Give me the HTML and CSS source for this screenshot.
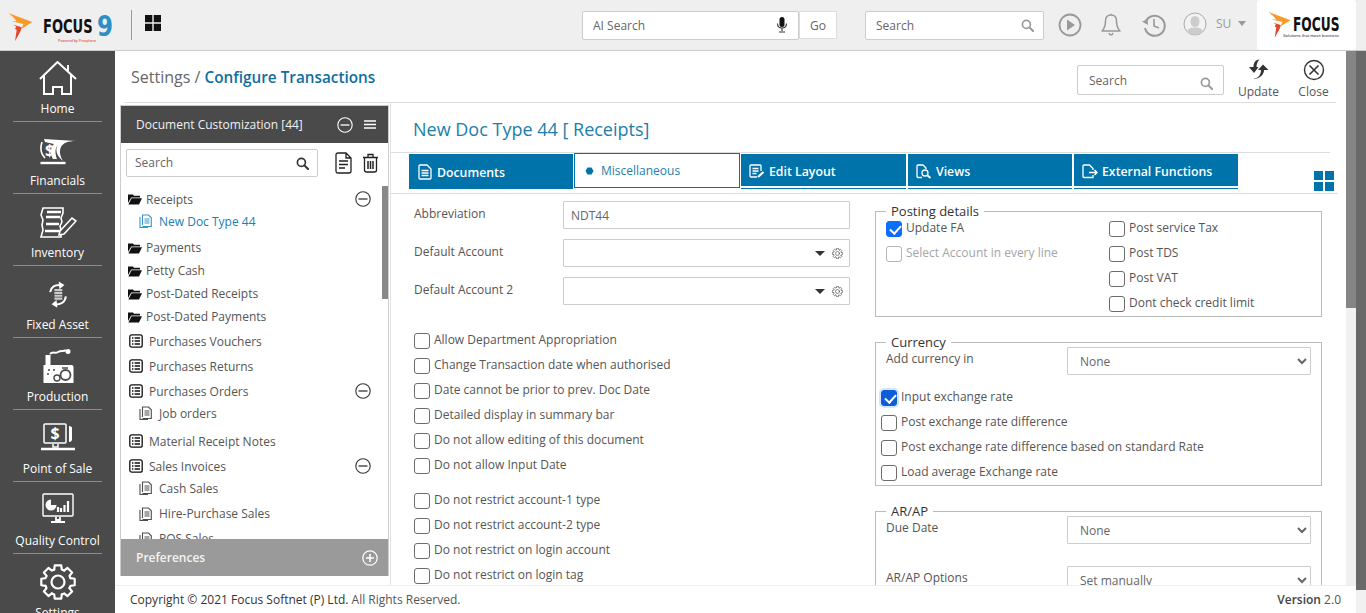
FILE: index.html
```html
<!DOCTYPE html>
<html lang="en">
  <head>
    <meta charset="UTF-8" />
    <meta name="viewport" content="width=device-width, initial-scale=1.0" />
    <title>Configure Transactions</title>
    <link rel="stylesheet" href="styles.css">
  </head>
  <body>
    <!-- SHARED ICONS -->
    <svg class="sprite">
      <symbol id="i-search" viewBox="0 0 14 14"><circle cx="5.8" cy="5.8" r="4.3" fill="none" stroke="currentColor" stroke-width="1.8"/><path d="M9 9l4 4" stroke="currentColor" stroke-width="2.2" stroke-linecap="round"/></symbol>
      <symbol id="i-minus" viewBox="0 0 16 16"><circle cx="8" cy="8" r="7.2" fill="none" stroke="currentColor" stroke-width="1.1"/><path d="M3.5 8h9" stroke="currentColor" stroke-width="1.3"/></symbol>
      <symbol id="i-folder" viewBox="0 0 14 12"><path d="M0 1.5h5l1 1.2h6v1.8H3.2L0 10zM3.6 5.2H14L11 11.5H.4z" fill="currentColor"/></symbol>
      <symbol id="i-list" viewBox="0 0 14 14"><rect x=".8" y=".8" width="12.4" height="12.4" rx="2" fill="none" stroke="currentColor" stroke-width="1.3"/><path d="M3 4h1.4M5.6 4H11M3 7h1.4M5.6 7H11M3 10h1.4M5.6 10H11" stroke="currentColor" stroke-width="1.3"/></symbol>
      <symbol id="i-sub" viewBox="0 0 13 14"><path d="M3.500 11V1h6l2.800 2.800V12.500H3.500M1 3v10.500h8" fill="none" stroke="currentColor" stroke-width="1.100"/><path d="M5.500 5h5M5.500 7h5M5.500 9h5" stroke="currentColor" stroke-width="1.100"/></symbol>
      <symbol id="i-gear" viewBox="0 0 36 36">
        <g fill="none" stroke="currentColor" stroke-width="2.200" stroke-linejoin="round" stroke-linecap="round">
          <path id="gear-tooth" d="M14.200 5.570L14.760 1.310H21.240L21.800 5.570L24.100 6.520"/>
          <use href="#gear-tooth" transform="rotate(45 18 18)"/>
          <use href="#gear-tooth" transform="rotate(90 18 18)"/>
          <use href="#gear-tooth" transform="rotate(135 18 18)"/>
          <use href="#gear-tooth" transform="rotate(180 18 18)"/>
          <use href="#gear-tooth" transform="rotate(225 18 18)"/>
          <use href="#gear-tooth" transform="rotate(270 18 18)"/>
          <use href="#gear-tooth" transform="rotate(315 18 18)"/>
          <circle cx="18" cy="18" r="6.500"/>
        </g>
      </symbol>
      <symbol id="i-flame" viewBox="0 0 24.500 28.500">
        <path d="M.3 0l24 9-10.600 6.700 1.600-4.700-11.600-2.700h5L5.300 4.300z" fill="#f79a2a"/>
        <path d="M5.300 11.700l8.400 2.600-1 3.400L7 28.300l1.700-11.600-1.800-.7 1.400-2.200z" fill="#e4472a"/>
      </symbol>
    </svg>

    <!-- TOP BAR -->
    <header class="topbar">
      <svg class="brand" width="112" height="38" viewBox="0 0 112 38">
        <use href="#i-flame" x="0" y="6" width="24.500" height="28.500"/>
        <text class="brand-name" transform="translate(35 26) scale(1 1.400)">FOCUS</text>
        <text class="brand-nine" x="89" y="29" textLength="16" lengthAdjust="spacingAndGlyphs">9</text>
        <text class="brand-tag" x="50" y="35" textLength="38" lengthAdjust="spacingAndGlyphs">Powered by Prosphere</text>
      </svg>
      <div class="divider"></div>
      <svg class="apps" width="16" height="16" viewBox="0 0 16 16"><path d="M0 0h7.300v7.300H0zM8.700 0H16v7.300H8.700zM0 8.700h7.300V16H0zM8.700 8.700H16V16H8.700z" fill="#111"/></svg>
      <div class="field ai-search">
        <input placeholder="AI Search" />
        <svg width="12" height="16" viewBox="0 0 12 16"><rect x="3.500" y="0" width="5" height="10" rx="2.500" fill="#111"/><path d="M1.500 6.500c0 6 9 6 9 0M6 11.500V14M3 15h6" fill="none" stroke="#333" stroke-width="1.100"/></svg>
      </div>
      <button class="go">Go</button>
      <div class="field top-search">
        <input placeholder="Search" />
        <svg class="muted-icon" width="13" height="13"><use href="#i-search"/></svg>
      </div>
      <svg class="tool play" width="24" height="24" viewBox="0 0 24 24"><circle cx="12" cy="12" r="10.500" fill="none" stroke="#999" stroke-width="1.800"/><path d="M9 6.500l8 5.500-8 5.500z" fill="#999"/></svg>
      <svg class="tool bell" width="24" height="24" viewBox="0 0 24 24"><path d="M12 2c-4 0-5.500 3-5.500 6 0 6-1.500 8-3.500 10h18c-2-2-3.500-4-3.500-10 0-3-1.500-6-5.500-6zM10 20c.5 2.500 3.500 2.500 4 0M12 2V.8" fill="none" stroke="#999" stroke-width="1.500" stroke-linejoin="round"/></svg>
      <svg class="tool history" width="24" height="24" viewBox="0 0 24 24"><path d="M3.500 9A10 10 0 1 1 3 15" fill="none" stroke="#999" stroke-width="2"/><path d="M0 8.500l5.500-2 .5 5.500z" fill="#999"/><path d="M12 6v7l5 2" fill="none" stroke="#999" stroke-width="1.600"/></svg>
      <svg class="tool avatar" width="24" height="24" viewBox="0 0 24 24"><circle cx="12" cy="12" r="11" fill="#f2f2f2" stroke="#aaa"/><ellipse cx="12" cy="9.500" rx="4.500" ry="5.500" fill="#ccc"/><path d="M4 20c1-4 5-4.500 8-4.500s7 .5 8 4.500c-4 3.500-12 3.500-16 0z" fill="#ccc"/></svg>
      <span class="user">SU</span>
      <span class="caret"></span>
      <div class="client-logo">
        <svg width="88" height="30" viewBox="0 0 88 30">
          <use href="#i-flame" x="0" y="2" width="23" height="26"/>
          <text class="brand-name small" transform="translate(25 21) scale(1 1.400)">FOCUS</text>
          <text class="brand-tag dark" x="15" y="27" textLength="56" lengthAdjust="spacingAndGlyphs">Solutions that move business</text>
        </svg>
      </div>
    </header>

    <div class="main">
      <!-- LEFT MENU -->
      <nav class="sidenav">
        <a class="nav-item">
          <svg width="40" height="36" viewBox="0 0 40 36" fill="none" stroke="#fff" stroke-width="2"><path d="M2 18L19.500 1 38 18M6 14v19h9v-7h9v7h9V14M30 4v6"/></svg>
          <span>Home</span>
        </a>
        <a class="nav-item">
          <svg width="38" height="36" viewBox="0 0 38 36" fill="none" stroke="#fff" stroke-width="1.600"><path d="M3 9C1 15 2 21 6 25"/><path d="M5 6l32 2c-8 0-13 2-15 6-2 4-1 9 2 14-5-4-8-9-6-15-2 3-2 8 0 13h-4c-3-5-3-11 1-15l-9-2z" fill="#fff" stroke="none"/><path d="M1.500 30h25" stroke-width="2.400"/><text class="nav-dollar" x="6" y="23">$</text></svg>
          <span>Financials</span>
        </a>
        <a class="nav-item">
          <svg width="38" height="36" viewBox="0 0 38 36" fill="none" stroke="#fff" stroke-width="1.600"><path d="M4 3h20v5l-2 5 1 4-2 4 1 4v7H2l2-7-1-5 1-5-2-5z"/><path d="M8 7h14M7 12h14M7 19h13M6 26h15" stroke-width="2.600"/><path d="M21 26l12-13 4 3-12 13-5 1z" fill="#4a4a4a"/></svg>
          <span>Inventory</span>
        </a>
        <a class="nav-item">
          <svg width="30" height="36" viewBox="-6 -5 42 46" fill="none" stroke="#fff" stroke-width="2.800"><path d="M4 14C5 7 11 3 19 4"/><path d="M16 -1l8 5-7 6z" fill="#fff" stroke="none"/><path d="M26 20c-1 8-7 12-15 11"/><path d="M14 36l-8-5 7-6z" fill="#fff" stroke="none"/><path d="M10 11h11M10 15h11M10 19h11M10 23h11" stroke="#ccc" stroke-width="3"/></svg>
          <span>Fixed Asset</span>
        </a>
        <a class="nav-item">
          <svg width="32" height="36" viewBox="0 0 32 36" fill="#fff"><path d="M1.500 16h2V6h5v10h21q2 0 2 2v16h-30z"/><path d="M8 5c3-3 5 0 8-2s6 0 8-2" fill="none" stroke="#fff" stroke-width="2"/><circle cx="26" cy="2.500" r="2.500"/><circle cx="23.500" cy="26" r="5" fill="none" stroke="#4a4a4a" stroke-width="1.800"/><circle cx="15" cy="29" r="3" fill="none" stroke="#4a4a4a" stroke-width="1.400"/><path d="M6 21h2M11 21h2M5 25h2M20 19h6" stroke="#4a4a4a" stroke-width="1.500"/></svg>
          <span>Production</span>
        </a>
        <a class="nav-item">
          <svg width="36" height="36" viewBox="0 0 36 36" fill="none" stroke="#fff" stroke-width="1.500"><rect x="4" y="3" width="22" height="19" rx="1"/><path d="M29 5c2 0 3 1 3 2v11c0 2-1 3-3 3z" fill="#fff" stroke="none"/><path d="M13 23v3h5v-3" /><path d="M1 28h34" stroke-width="2.600"/><text class="nav-dollar" x="10.500" y="18">$</text></svg>
          <span>Point of Sale</span>
        </a>
        <a class="nav-item">
          <svg width="34" height="36" viewBox="0 0 34 36" fill="none" stroke="#fff" stroke-width="1.400"><rect x="2" y="1" width="30" height="22" rx="1"/><path d="M10 6.500a5.500 5.500 0 1 0 5.500 5.500H10z" fill="#fff" stroke="none"/><path d="M17 19v-5M20 19v-4M23.500 19v-7M27 19V8" stroke-width="2.200"/><path d="M15 24v3h4v-3M10 29h14" stroke-width="1.800"/></svg>
          <span>Quality Control</span>
        </a>
        <a class="nav-item settings">
          <svg width="36" height="36"><use href="#i-gear"/></svg>
          <span>Settings</span>
        </a>
      </nav>

      <div class="page">
        <!-- PAGE TITLE -->
        <div class="page-head">
          <h1 class="crumbs">Settings / <b>Configure Transactions</b></h1>
          <div class="field head-search">
            <input placeholder="Search" />
            <svg class="muted-icon" width="13" height="13"><use href="#i-search"/></svg>
          </div>
          <a class="action action-first">
            <svg width="22" height="22" viewBox="0 0 22 22" fill="#333"><path d="M11.500.5C7 1 5.500 4 5.500 8H1l5 6 4.500-6h-2c0-3 1-5.500 3-7.500z"/><path d="M5 19.500c5 0 8-3.500 8-8.500h-3l5-5.500 5.500 5.500H16c0 5-5 9.500-11 8.500z"/></svg>
            <span>Update</span>
          </a>
          <a class="action">
            <svg width="22" height="22" viewBox="0 0 22 22" fill="none" stroke="#333" stroke-width="1.400"><circle cx="11" cy="11" r="9.500"/><path d="M6.500 6.500l9 9M15.500 6.500l-9 9" stroke-width="1.600"/></svg>
            <span>Close</span>
          </a>
        </div>

        <div class="work">
          <!-- DOCUMENT TREE -->
          <aside class="panel">
            <div class="panel-head">
              <span>Document Customization [44]</span>
              <svg class="panel-minus" width="16" height="16"><use href="#i-minus"/></svg>
              <svg width="12" height="9" viewBox="0 0 12 9"><path d="M0 1h12M0 4.500h12M0 8h12" stroke="#fff" stroke-width="1.300"/></svg>
            </div>
            <div class="panel-tools">
              <div class="field panel-search">
                <input placeholder="Search" />
                <svg class="dark-icon" width="13" height="13"><use href="#i-search"/></svg>
              </div>
              <svg class="doc-icon" width="17" height="22" viewBox="0 0 17 22" fill="none" stroke="#222" stroke-width="1.300"><path d="M1 3q0-2 2-2h8l5 5v13q0 2-2 2H3q-2 0-2-2zM11 1v5h5"/><path d="M4 9h9M4 12.500h9M4 16h6"/></svg>
              <svg class="trash-icon" width="17" height="20" viewBox="0 0 17 20" fill="none" stroke="#222" stroke-width="1.300"><path d="M1 4.500h15M6 4.500V1.500h5v3M2.500 4.500V17q0 2 2 2h8q2 0 2-2V4.500"/><path d="M6 8v8M8.500 8v8M11 8v8" stroke-width="1.500"/></svg>
            </div>
            <div class="tree">
              <div class="tree-thumb"></div>
              <div class="row row-folder first"><svg width="14" height="12"><use href="#i-folder"/></svg><span>Receipts</span><svg class="row-minus" width="16" height="16"><use href="#i-minus"/></svg></div>
              <div class="row row-sub active"><svg width="13" height="14"><use href="#i-sub"/></svg><span>New Doc Type 44</span></div>
              <div class="row row-folder gap"><svg width="14" height="12"><use href="#i-folder"/></svg><span>Payments</span></div>
              <div class="row row-folder"><svg width="14" height="12"><use href="#i-folder"/></svg><span>Petty Cash</span></div>
              <div class="row row-folder"><svg width="14" height="12"><use href="#i-folder"/></svg><span>Post-Dated Receipts</span></div>
              <div class="row row-folder"><svg width="14" height="12"><use href="#i-folder"/></svg><span>Post-Dated Payments</span></div>
              <div class="row row-list"><svg width="14" height="14"><use href="#i-list"/></svg><span>Purchases Vouchers</span></div>
              <div class="row row-list"><svg width="14" height="14"><use href="#i-list"/></svg><span>Purchases Returns</span></div>
              <div class="row row-list"><svg width="14" height="14"><use href="#i-list"/></svg><span>Purchases Orders</span><svg class="row-minus" width="16" height="16"><use href="#i-minus"/></svg></div>
              <div class="row row-sub short"><svg width="13" height="14"><use href="#i-sub"/></svg><span>Job orders</span></div>
              <div class="row row-list gap-small"><svg width="14" height="14"><use href="#i-list"/></svg><span>Material Receipt Notes</span></div>
              <div class="row row-list"><svg width="14" height="14"><use href="#i-list"/></svg><span>Sales Invoices</span><svg class="row-minus" width="16" height="16"><use href="#i-minus"/></svg></div>
              <div class="row row-sub short"><svg width="13" height="14"><use href="#i-sub"/></svg><span>Cash Sales</span></div>
              <div class="row row-sub spaced"><svg width="13" height="14"><use href="#i-sub"/></svg><span>Hire-Purchase Sales</span></div>
              <div class="row row-sub"><svg width="13" height="14"><use href="#i-sub"/></svg><span>POS Sales</span></div>
            </div>
            <div class="panel-foot">
              <span>Preferences</span>
              <svg width="16" height="16" viewBox="0 0 16 16" fill="none" stroke="#fff"><circle cx="8" cy="8" r="7.200" stroke-width="1.200"/><path d="M4 8h8M8 4v8" stroke-width="1.500"/></svg>
            </div>
          </aside>

          <!-- DOCUMENT FORM -->
          <section class="editor">
            <h2 class="doc-title">New Doc Type 44 [ Receipts]</h2>
            <div class="tabs">
              <a class="tab tab-first"><svg width="14" height="16" viewBox="0 0 14 16" fill="none" stroke="#fff" stroke-width="1.300"><path d="M1 2q0-1 1-1h7l4 4v9q0 1-1 1H2q-1 0-1-1z"/><path d="M3.500 6.500h7M3.500 9h7M3.500 11.500h7"/></svg>Documents</a>
              <a class="tab tab-on"><svg width="9" height="8" viewBox="0 0 9 8"><path d="M2.500.5h4L8.500 4l-2 3.500h-4L.5 4z" fill="#0073aa"/></svg>Miscellaneous</a>
              <a class="tab tab-low"><svg width="16" height="15" viewBox="0 0 16 15" fill="none" stroke="#fff" stroke-width="1.300"><path d="M12 7V2q0-1-1-1H2q-1 0-1 1v10q0 1 1 1h6"/><path d="M3.500 4.500h6M3.500 7h6M3.500 9.500h4"/><path d="M9 13l5.500-5" stroke-width="2.200"/></svg>Edit Layout</a>
              <a class="tab tab-low"><svg width="16" height="15" viewBox="0 0 16 15" fill="none" stroke="#fff" stroke-width="1.300"><path d="M6 13.500H2q-1 0-1-1V2q0-1 1-1h5l3 3v1"/><circle cx="9" cy="9" r="3"/><path d="M11 11l3.500 3" stroke-width="1.800"/></svg>Views</a>
              <a class="tab tab-low"><svg width="16" height="15" viewBox="0 0 16 15" fill="none" stroke="#fff" stroke-width="1.300"><path d="M11 11v2.500H2q-1 0-1-1V2q0-1 1-1h5.500L11 4.500V6"/><path d="M7 8.500h8M12.500 6l2.500 2.500-2.500 2.500" stroke-width="1.500"/></svg>External Functions</a>
              <svg class="layout-grid" width="20" height="20" viewBox="0 0 20 20"><path d="M0 0h9v9H0zM11 0h9v9h-9zM0 11h9v9H0zM11 11h9v9h-9z" fill="#0073aa"/></svg>
            </div>
            <div class="form">
              <div class="col-left">
                <div class="form-row">
                  <label>Abbreviation</label>
                  <input class="text-input" value="NDT44" />
                </div>
                <div class="form-row">
                  <label>Default Account</label>
                  <div class="lookup"><span class="lookup-arrow"></span><svg class="lookup-gear" width="11" height="11"><use href="#i-gear"/></svg></div>
                </div>
                <div class="form-row">
                  <label>Default Account 2</label>
                  <div class="lookup"><span class="lookup-arrow"></span><svg class="lookup-gear" width="11" height="11"><use href="#i-gear"/></svg></div>
                </div>

                <div class="checks first-checks">
                  <label class="check"><input type="checkbox" /><span>Allow Department Appropriation</span></label>
                  <label class="check"><input type="checkbox" /><span>Change Transaction date when authorised</span></label>
                  <label class="check"><input type="checkbox" /><span>Date cannot be prior to prev. Doc Date</span></label>
                  <label class="check"><input type="checkbox" /><span>Detailed display in summary bar</span></label>
                  <label class="check"><input type="checkbox" /><span>Do not allow editing of this document</span></label>
                  <label class="check"><input type="checkbox" /><span>Do not allow Input Date</span></label>
                </div>
                <div class="checks second-checks">
                  <label class="check"><input type="checkbox" /><span>Do not restrict account-1 type</span></label>
                  <label class="check"><input type="checkbox" /><span>Do not restrict account-2 type</span></label>
                  <label class="check"><input type="checkbox" /><span>Do not restrict on login account</span></label>
                  <label class="check"><input type="checkbox" /><span>Do not restrict on login tag</span></label>
                </div>
              </div>

              <div class="col-right">
                <fieldset class="group">
                  <legend>Posting details</legend>
                  <div class="group-body posting">
                    <div>
                      <label class="check"><input type="checkbox" checked /><span>Update FA</span></label>
                      <label class="check disabled"><input type="checkbox" disabled /><span>Select Account in every line</span></label>
                    </div>
                    <div>
                      <label class="check"><input type="checkbox" /><span>Post service Tax</span></label>
                      <label class="check"><input type="checkbox" /><span>Post TDS</span></label>
                      <label class="check"><input type="checkbox" /><span>Post VAT</span></label>
                      <label class="check"><input type="checkbox" /><span>Dont check credit limit</span></label>
                    </div>
                  </div>
                </fieldset>

                <fieldset class="group">
                  <legend>Currency</legend>
                  <div class="group-body">
                    <div class="pick-row">
                      <label>Add currency in</label>
                      <select class="pick"><option>None</option></select>
                    </div>
                    <div class="checks currency-checks">
                      <label class="check focused"><input type="checkbox" checked /><span>Input exchange rate</span></label>
                      <label class="check"><input type="checkbox" /><span>Post exchange rate difference</span></label>
                      <label class="check"><input type="checkbox" /><span>Post exchange rate difference based on standard Rate</span></label>
                      <label class="check"><input type="checkbox" /><span>Load average Exchange rate</span></label>
                    </div>
                  </div>
                </fieldset>

                <fieldset class="group">
                  <legend>AR/AP</legend>
                  <div class="group-body">
                    <div class="pick-row tall">
                      <label>Due Date</label>
                      <select class="pick"><option>None</option></select>
                    </div>
                    <div class="pick-row tall">
                      <label>AR/AP Options</label>
                      <select class="pick"><option>Set manually</option></select>
                    </div>
                  </div>
                </fieldset>
              </div>
            </div>
          </section>
        </div>

        <footer class="footer">
          <span><b class="copy">Copyright &copy; 2021 Focus Softnet (P) Ltd.</b> All Rights Reserved.</span>
          <span><b>Version</b> 2.0</span>
        </footer>
      </div>

      <!-- SCROLLBARS -->
      <div class="scroll-inner"><div class="thumb-inner"></div></div>
      <div class="scroll-outer"><div class="thumb-outer"></div></div>
    </div>
  </body>
</html>
```

FILE: styles.css
```css
* {
  box-sizing: border-box;
}
html, body {
  margin: 0;
  height: 613px;
  overflow: hidden;
}
body {
  font-family: "Open Sans", "DejaVu Sans", sans-serif;
  font-size: 12px;
  color: #555;
  background: #fff;
}
.sprite {
  display: none;
}
input, select, button {
  font-family: inherit;
  font-size: 12px;
  color: #666;
}
input::placeholder {
  color: #666;
  opacity: 1;
}

/* top bar */
.topbar {
  display: flex;
  align-items: center;
  height: 51px;
  padding-left: 8px;
  background: #efefef;
  border-bottom: 1px solid #ccc;
}
.brand {
  flex: none;
  margin-top: 2px;
}
.brand-name {
  font-family: "DejaVu Sans Condensed", "DejaVu Sans", sans-serif;
  font-weight: 700;
  font-size: 14.5px;
  fill: #111;
}
.brand-name.small {
  font-size: 13.6px;
}
.brand-nine {
  font-family: "DejaVu Sans", sans-serif;
  font-weight: 700;
  font-size: 28px;
  fill: #2a8fc7;
}
.brand-tag {
  font-family: "Liberation Sans", "Open Sans", sans-serif;
  font-size: 3.5px;
  fill: #d33;
}
.brand-tag.dark {
  fill: #333;
}
.divider {
  width: 1px;
  height: 30px;
  margin-left: 11px;
  background: #999;
}
.apps {
  margin-left: 13px;
  margin-top: -4px;
}
.field {
  display: flex;
  align-items: center;
  background: #fff;
  border: 1px solid #ccc;
  border-radius: 2px;
}
.field input {
  flex: 1;
  min-width: 0;
  height: 100%;
  border: 0;
  outline: 0;
  padding: 0;
  background: transparent;
}
.muted-icon {
  color: #999;
}
.dark-icon {
  color: #333;
}
.ai-search {
  width: 217px;
  height: 29px;
  margin-left: 421px;
  padding: 0 10px;
}
.go {
  width: 38px;
  height: 28px;
  background: #fff;
  border: 1px solid #ddd;
}
.top-search {
  width: 179px;
  height: 29px;
  margin-left: 28px;
  padding: 0 9px 0 10px;
}
.tool {
  flex: none;
}
.play {
  margin-left: 14px;
}
.bell {
  margin-left: 17px;
}
.history {
  margin-left: 19px;
}
.avatar {
  margin-left: 17px;
  margin-top: -3px;
}
.user {
  margin-left: 9px;
  margin-top: -4px;
  color: #999;
}
.caret {
  margin-left: 7px;
  margin-top: -3px;
  border-left: 4px solid transparent;
  border-right: 4px solid transparent;
  border-top: 5px solid #999;
}
.client-logo {
  display: flex;
  align-items: center;
  width: 99px;
  height: 50px;
  margin-left: 11px;
  padding-left: 11px;
  background: #fff;
  border-radius: 3px;
}

/* layout */
.main {
  display: flex;
  height: 562px;
}
.sidenav {
  flex: none;
  width: 115px;
  background: #4a4a4a;
  overflow: hidden;
}
.nav-item {
  display: flex;
  flex-direction: column;
  align-items: center;
  gap: 4px;
  height: 72px;
  margin: 0 13px;
  padding-top: 11px;
  color: #fff;
  line-height: 16px;
  white-space: nowrap;
  border-bottom: 1px solid #8b8b8b;
}
.nav-item:first-child {
  height: 71px;
  padding-top: 10px;
}
.nav-item svg {
  flex: none;
}
.nav-item.settings {
  border-bottom: 0;
  gap: 5px;
  height: 90px;
  padding-top: 10px;
}
.nav-dollar {
  font-family: "Open Sans", sans-serif;
  font-weight: 700;
  font-size: 16px;
  fill: #fff;
  stroke: none;
}
.page {
  flex: 1;
  min-width: 0;
  display: flex;
  flex-direction: column;
}
.scroll-inner {
  flex: none;
  width: 10px;
  height: 534px;
  background: #f1f1f1;
}
.thumb-inner {
  height: 257px;
  background: #858585;
}
.scroll-outer {
  flex: none;
  width: 10px;
  background: #f1f1f1;
}
.thumb-outer {
  height: 539px;
  background: #696969;
}

/* page title */
.page-head {
  flex: none;
  display: flex;
  align-items: flex-start;
  height: 52px;
  margin: 0 10px;
  padding-left: 6px;
  border-bottom: 1px solid #ddd;
}
.crumbs {
  flex: 1;
  margin: 16px 0 0;
  font-size: 16px;
  font-weight: 400;
  line-height: 20px;
  color: #666;
}
.crumbs b {
  font-size: 15.3px;
  font-weight: 600;
  color: #0f6f9f;
}
.head-search {
  width: 147px;
  height: 30px;
  margin-top: 14px;
  padding: 0 10px 0 11px;
}
.head-search svg {
  margin-top: 6px;
}
.action {
  display: flex;
  flex-direction: column;
  align-items: center;
  gap: 3px;
  width: 55px;
  padding-top: 8px;
  line-height: 16px;
}
.action-first {
  margin-left: 7px;
}
.action:last-child {
  margin-right: -5px;
}

/* document tree */
.work {
  flex: 1;
  min-height: 0;
  display: flex;
  overflow: hidden;
}
.panel {
  flex: none;
  display: flex;
  flex-direction: column;
  width: 269px;
  height: 471px;
  margin: 2px 0 0 5px;
  border: 1px solid #ccc;
  border-bottom: 0;
}
.panel-head {
  flex: none;
  display: flex;
  align-items: center;
  height: 37px;
  padding: 0 12px 0 15px;
  background: #4a4a4a;
  color: #f0f0f0;
}
.panel-head span {
  flex: 1;
}
.panel-minus {
  color: #fff;
  margin-right: 11px;
}
.panel-tools {
  flex: none;
  display: flex;
  align-items: center;
  height: 39px;
  padding: 1px 8px 0 5px;
}
.panel-search {
  width: 192px;
  height: 28px;
  padding: 0 8px;
}
.panel-search input {
  margin-top: -2px;
}
.doc-icon {
  margin-left: 17px;
  margin-top: -1px;
}
.trash-icon {
  margin-left: 10px;
  margin-top: -1px;
}
.tree {
  position: relative;
  flex: 1;
  min-height: 0;
  padding-top: 6px;
  overflow: hidden;
  color: #555;
}
.tree-thumb {
  position: absolute;
  top: 4px;
  right: 0;
  width: 6px;
  height: 113px;
  background: #888;
}
.row {
  display: flex;
  align-items: center;
  padding-right: 17px;
  white-space: nowrap;
}
.row > svg:first-child {
  flex: none;
  color: #111;
}
.row-folder {
  height: 23px;
  padding-left: 7px;
  gap: 4px;
}
.row-folder.first {
  height: 22px;
}
.row-folder.gap {
  margin-top: 4px;
}
.row-list {
  height: 25px;
  padding-left: 8px;
  gap: 6px;
}
.row-list > span {
  margin-top: 2px;
}
.row-list.gap-small {
  margin-top: 5px;
}
.row-sub {
  height: 25px;
  padding-left: 18px;
  gap: 7px;
}
.row-sub > svg:first-child {
  color: #4d4d4d;
}
.row-sub.short {
  height: 20px;
}
.row-sub.spaced {
  margin-top: 3px;
}
.row-sub.active {
  height: 22px;
  color: #1c80ad;
}
.row-sub.active > svg:first-child {
  color: #3b95c2;
}
.row-minus {
  margin-left: auto;
  color: #333;
}
.panel-foot {
  flex: none;
  display: flex;
  align-items: center;
  justify-content: space-between;
  height: 37px;
  padding: 0 10px 0 15px;
  background: #9a9a9a;
  color: #f4f4f4;
  font-weight: 600;
}

/* document form */
.editor {
  flex: 1;
  min-width: 0;
  margin-left: 1px;
  border-left: 1px solid #e2e2e2;
  overflow: hidden;
}
.doc-title {
  height: 50px;
  margin: 0 16px 0 0;
  padding: 13px 0 0 22px;
  font-size: 18px;
  font-weight: 400;
  line-height: 26px;
  color: #1c7ea9;
  border-bottom: 1px solid #ddd;
}
.tabs {
  display: flex;
  align-items: flex-start;
  gap: 1px;
  height: 41px;
  padding: 1px 0 0 18px;
  margin-right: 8px;
  border-bottom: 1px solid #ddd;
}
.tab {
  display: flex;
  align-items: center;
  gap: 4px;
  width: 165px;
  height: 35px;
  padding: 0 0 0 8px;
  background: #0073aa;
  color: #fff;
  font-size: 12.3px;
  font-weight: 600;
}
.tab-first {
  padding: 1px 0 0 9px;
  gap: 5px;
  width: 164px;
}
.tab-on {
  width: 166px;
  margin-top: -1px;
  padding: 0 0 0 10px;
  gap: 7px;
  background: #fff;
  border: 1px solid #0073aa;
  color: #1c80ad;
  font-size: 12px;
  font-weight: 400;
}
.tab-low {
  border-bottom: 1px solid #0073aa;
  box-shadow: inset 0 -2px 0 #fff;
}
.tab-low + .tab-low {
  width: 164px;
  margin-left: 1px;
}
.layout-grid {
  margin: 17px 0 0 75px;
}
.form {
  display: flex;
  gap: 25px;
  padding-left: 23px;
}
.col-left {
  flex: none;
  width: 436px;
  padding-top: 7px;
}
.form-row {
  display: flex;
  align-items: flex-start;
  height: 38px;
}
.form-row > label {
  flex: none;
  width: 149px;
  padding-top: 5px;
  line-height: 16px;
}
.text-input {
  width: 287px;
  height: 28px;
  padding: 0 7px;
  border: 1px solid #ccc;
  border-radius: 1px;
  outline: 0;
}
.lookup {
  display: flex;
  align-items: center;
  justify-content: flex-end;
  width: 287px;
  height: 28px;
  padding-right: 6px;
  border: 1px solid #ccc;
  border-radius: 1px;
}
.lookup-arrow {
  margin-right: 7px;
  border-left: 5px solid transparent;
  border-right: 5px solid transparent;
  border-top: 5px solid #333;
}
.lookup-gear {
  color: #555;
}
.checks {
  display: flex;
  flex-direction: column;
}
.first-checks {
  margin-top: 13px;
}
.second-checks {
  margin-top: 10px;
}
.check {
  display: flex;
  align-items: center;
  gap: 4px;
  height: 25px;
  white-space: nowrap;
}
.check span {
  margin-top: -2px;
}
.check input {
  appearance: none;
  flex: none;
  position: relative;
  width: 16px;
  height: 16px;
  margin: 0;
  background: #fff;
  border: 1px solid #6c6c6c;
  border-radius: 3px;
}
.check input:checked {
  background: #0d6efd;
  border-color: #0d6efd;
}
.check input:checked::after {
  content: "";
  position: absolute;
  left: 4.5px;
  top: 1.5px;
  width: 5px;
  height: 9px;
  border: solid #fff;
  border-width: 0 2.2px 2.2px 0;
  transform: rotate(42deg);
}
.check.disabled {
  color: #a5a5a5;
}
.check.disabled input {
  border-color: #b5b5b5;
}
.check.focused input {
  background: #0b5ed7;
  border-color: #0b5ed7;
  box-shadow: 0 0 0 2px rgba(13, 110, 253, .18);
}

/* right column groups */
.col-right {
  flex: none;
  width: 447px;
  padding-top: 9px;
}
.group {
  margin: 0 0 17px;
  padding: 0;
  border: 1px solid #bbb;
  min-width: 0;
}
.group legend {
  margin-left: 10px;
  padding: 0 5px;
  font-size: 13px;
  line-height: 16px;
  color: #333;
}
.group-body {
  margin-top: -3px;
  padding-left: 10px;
}
.posting {
  display: grid;
  grid-template-columns: 223px 1fr;
}
.pick-row {
  display: flex;
  align-items: flex-start;
  height: 38px;
}
.pick-row.tall {
  height: 50px;
}
.pick-row > label {
  flex: none;
  width: 181px;
  padding-top: 2px;
  line-height: 20px;
}
.pick {
  width: 244px;
  height: 28px;
  padding: 0 8px;
  background: #fff;
  border: 1px solid #ccc;
  border-radius: 1px;
}
.currency-checks {
  margin-left: -5px;
}

/* footer */
.footer {
  flex: none;
  position: relative;
  display: flex;
  align-items: center;
  justify-content: space-between;
  height: 28px;
  margin-right: -10px;
  padding: 0 15px;
  background: #fff;
  border-top: 1px solid #eee;
  color: #555;
}
.footer b {
  font-weight: 600;
  color: #444;
}
.footer b.copy {
  font-weight: 500;
  color: #333;
}
```
